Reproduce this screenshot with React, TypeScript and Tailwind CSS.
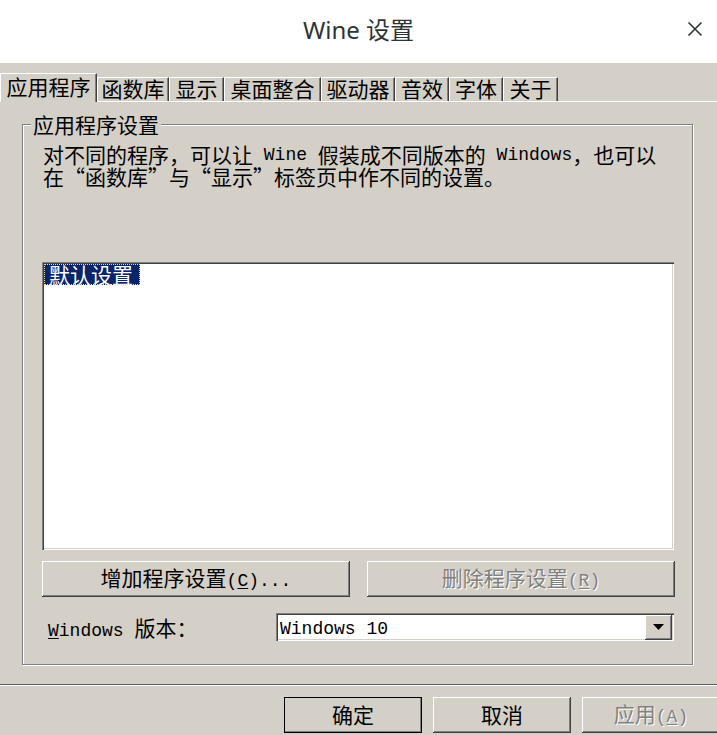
import { ReactNode } from "react";

const cjk = { fontFamily: '"Noto Sans CJK SC", "Noto Sans", sans-serif' };
const mono = { fontFamily: '"Liberation Mono", "Noto Sans CJK SC", monospace' };

const raised =
  "shadow-[inset_-1px_-1px_0_#404040,inset_1px_1px_0_#ffffff,inset_-2px_-2px_0_#808080,inset_2px_2px_0_#d4d0c8]";
const sunken =
  "shadow-[inset_1px_1px_0_#808080,inset_2px_2px_0_#404040,inset_-1px_-1px_0_#ffffff,inset_-2px_-2px_0_#d4d0c8]";

const tabs = [
  { label: "应用程序", w: "w-[97px]", active: true },
  { label: "函数库", w: "w-[72px]" },
  { label: "显示", w: "w-[55px]" },
  { label: "桌面整合", w: "w-[97px]" },
  { label: "驱动器", w: "w-[74px]" },
  { label: "音效", w: "w-[54px]" },
  { label: "字体", w: "w-[54px]" },
  { label: "关于", w: "w-[55px]" },
];

function Latin({ children }: { children: ReactNode }) {
  return (
    <span style={mono} className="text-[18px] leading-none">
      {children}
    </span>
  );
}

function Button({
  children,
  w,
  disabled,
  isDefault,
}: {
  children: ReactNode;
  w: string;
  disabled?: boolean;
  isDefault?: boolean;
}) {
  return (
    <div
      className={`${w} h-[36px] shrink-0 flex items-center justify-center pb-[2px] bg-[#d4d0c8] text-[21px] leading-none ${raised} ${
        isDefault ? "outline outline-1 outline-black -outline-offset-1" : ""
      } ${disabled ? "text-[#808080] [text-shadow:1px_1px_0_#ffffff]" : "text-black"}`}
    >
      {children}
    </div>
  );
}

export default function App() {
  return (
    <div style={cjk} className="w-[717px] h-[735px] overflow-hidden bg-[#d4d0c8] flex flex-col text-black">
      {/* title bar */}
      <div className="h-[63px] shrink-0 bg-white flex items-center justify-center relative">
        <span
          style={{ fontFamily: '"Noto Sans", "Noto Sans CJK SC", sans-serif' }}
          className="text-[24px] text-[#2e3436] -mt-[4px]"
        >
          Wine 设置
        </span>
        <svg className="absolute right-[14px] top-[21px]" width="16" height="16" viewBox="0 0 16 16">
          <path d="M1.5 1.5 L14.5 14.5 M14.5 1.5 L1.5 14.5" stroke="#2e3436" strokeWidth="1.6" />
        </svg>
      </div>

      {/* tabs */}
      <div className="h-[39px] shrink-0 flex items-end border-b border-white">
        {tabs.map((t) => (
          <div
            key={t.label}
            className={`${t.w} shrink-0 flex items-center justify-center border-l border-t border-white border-r border-r-[#404040] shadow-[inset_-1px_0_0_#808080] bg-[#d4d0c8] text-[21px] leading-none ${
              t.active ? "h-[29px] -mb-px pb-[4px]" : "h-[24px] pb-[2px]"
            }`}
          >
            {t.label}
          </div>
        ))}
      </div>

      {/* tab page */}
      <div className="h-[583px] shrink-0 border-b border-[#5a5a5a] pt-[22px] pl-[22px]">
        <div className="relative w-[671px] h-[541px] border border-[#808080] shadow-[inset_1px_1px_0_#ffffff,1px_1px_0_#ffffff] pt-[19px] pl-[19px]">
          <span className="absolute -top-[12px] left-[8px] px-[2px] bg-[#d4d0c8] text-[21px] leading-[22px]">
            应用程序设置
          </span>

          <div className="ml-[1px] text-[21px] whitespace-pre">
            <div className="h-[22px] flex items-center">
              对不同的程序，可以让<Latin> Wine </Latin>假装成不同版本的<Latin> Windows</Latin>，也可以
            </div>
            <div className="h-[22px] flex items-center">在“函数库”与“显示”标签页中作不同的设置。</div>
          </div>

          {/* list box */}
          <div className={`mt-[74px] w-[632px] h-[288px] bg-white p-[2px] ${sunken}`}>
            <div className="w-[96px] h-[21px] bg-[#0a246a] text-white text-[21px] leading-[20px] pl-[5px] outline outline-1 outline-dotted outline-[#f5e27a] -outline-offset-1">
              默认设置
            </div>
          </div>

          {/* buttons */}
          <div className="mt-[11px] flex gap-[17px]">
            <Button w="w-[308px]">
              <span>
                增加程序设置
                <Latin>
                  (<span className="underline underline-offset-2">C</span>)...
                </Latin>
              </span>
            </Button>
            <Button w="w-[308px]" disabled>
              <span>
                删除程序设置
                <Latin>
                  (<span className="underline underline-offset-2">R</span>)
                </Latin>
              </span>
            </Button>
          </div>

          {/* windows version */}
          <div className="mt-[16px] flex items-center h-[28px]">
            <span className="ml-[6px] w-[228px] pt-[3px] text-[21px] leading-none">
              <Latin>
                <span className="underline underline-offset-2">W</span>indows{" "}
              </Latin>
              版本：
            </span>
            <div className={`w-[398px] h-[28px] bg-white flex items-center pl-[4px] pr-[2px] ${sunken}`}>
              <span style={mono} className="flex-1 pt-[3px] text-[18px] leading-none">
                Windows 10
              </span>
              <div className={`w-[27px] h-[25px] bg-[#d4d0c8] flex items-center justify-center ${raised}`}>
                <svg width="11" height="6" viewBox="0 0 11 6">
                  <path d="M0 0 H11 L5.5 6 Z" fill="#000" />
                </svg>
              </div>
            </div>
          </div>
        </div>
      </div>
      <div className="h-px shrink-0 bg-white" />

      {/* dialog buttons */}
      <div className="pt-[11px] pl-[284px] flex gap-[11px]">
        <Button w="w-[138px]" isDefault>
          确定
        </Button>
        <Button w="w-[138px]">取消</Button>
        <Button w="w-[138px]" disabled>
          <span>
            应用
            <Latin>
              (<span className="underline underline-offset-2">A</span>)
            </Latin>
          </span>
        </Button>
      </div>
    </div>
  );
}
